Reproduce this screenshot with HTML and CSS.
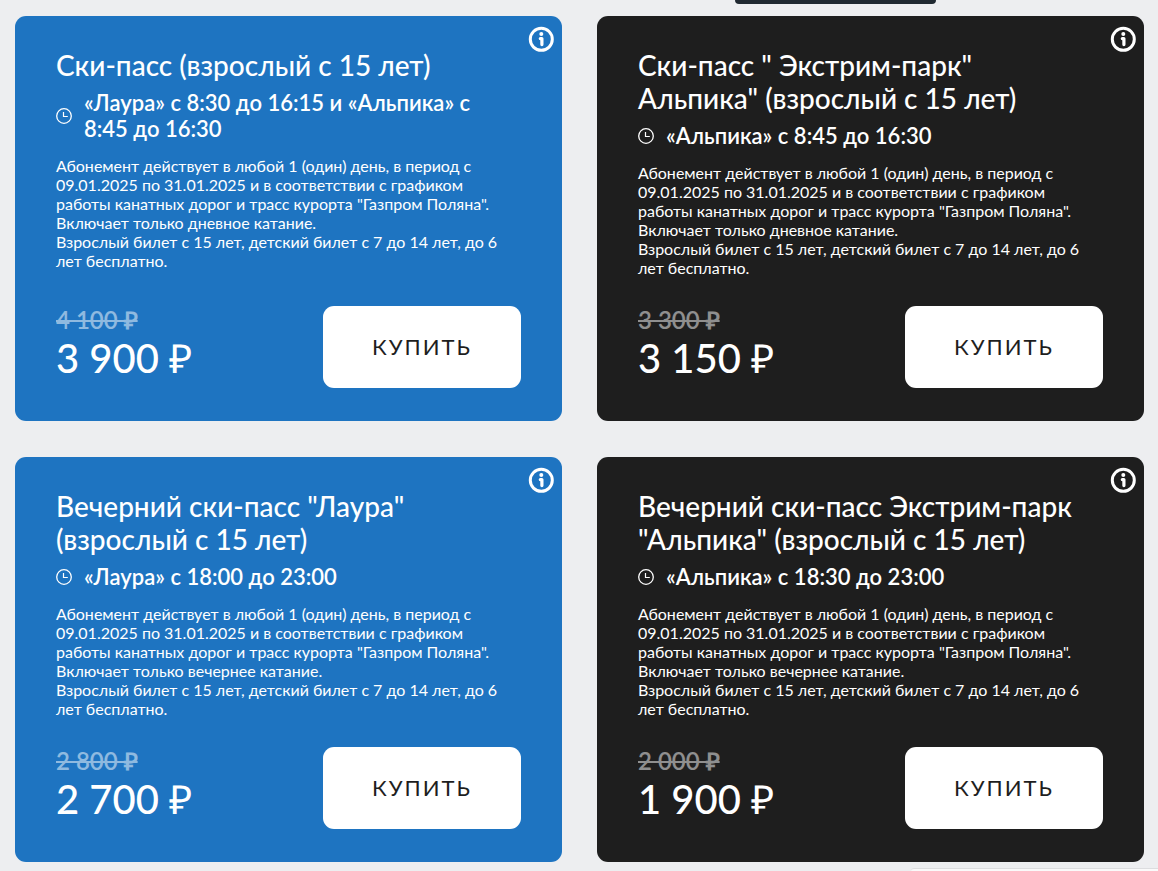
FILE: index.html
```html
<!DOCTYPE html>
<html lang="ru">
<head>
    <meta charset="UTF-8">
    <meta name="viewport" content="width=device-width, initial-scale=1.0">
    <title>Ски-пассы</title>
    <link rel="stylesheet" href="styles.css">
</head>
<body>
    <!-- Shared icons -->
    <svg class="sprite" aria-hidden="true">
        <symbol id="clock" viewBox="0 0 16 16">
            <circle cx="8" cy="8" r="7.3" fill="none" stroke="currentColor" stroke-width="1.3"/>
            <path d="M7.5 4v4.5h4.3" fill="none" stroke="currentColor" stroke-width="1.2"/>
        </symbol>
        <symbol id="info" viewBox="0 0 26 26">
            <circle cx="13.3" cy="13.3" r="11" fill="none" stroke="currentColor" stroke-width="3"/>
            <circle cx="13.3" cy="8" r="2" fill="currentColor"/>
            <path d="M12.3 12.6h1.6v6" fill="none" stroke="currentColor" stroke-width="3.2" stroke-linecap="round" stroke-linejoin="round"/>
        </symbol>
    </svg>
    <div class="top-tab"></div>

    <main class="cards">
        <article class="card blue">
            <button class="info" type="button" aria-label="Информация"><svg><use href="#info"/></svg></button>
            <h2 class="title">Ски-пасс (взрослый с 15 лет)</h2>
            <div class="time"><svg><use href="#clock"/></svg><span>«Лаура» с 8:30 до 16:15 и «Альпика» с<br>8:45 до 16:30</span></div>
            <p class="text">Абонемент действует в любой 1 (один) день, в период с<br>09.01.2025 по 31.01.2025 и в соответствии с графиком<br>работы канатных дорог и трасс курорта "Газпром Поляна".<br>Включает только дневное катание.<br>Взрослый билет с 15 лет, детский билет с 7 до 14 лет, до 6<br>лет бесплатно.</p>
            <div class="bottom">
                <div>
                    <del class="old">4 100 ₽</del>
                    <div class="price">3 900 ₽</div>
                </div>
                <button class="buy" type="button">КУПИТЬ</button>
            </div>
        </article>

        <article class="card dark">
            <button class="info" type="button" aria-label="Информация"><svg><use href="#info"/></svg></button>
            <h2 class="title">Ски-пасс " Экстрим-парк"<br>Альпика" (взрослый с 15 лет)</h2>
            <div class="time"><svg><use href="#clock"/></svg><span>«Альпика» с 8:45 до 16:30</span></div>
            <p class="text">Абонемент действует в любой 1 (один) день, в период с<br>09.01.2025 по 31.01.2025 и в соответствии с графиком<br>работы канатных дорог и трасс курорта "Газпром Поляна".<br>Включает только дневное катание.<br>Взрослый билет с 15 лет, детский билет с 7 до 14 лет, до 6<br>лет бесплатно.</p>
            <div class="bottom">
                <div>
                    <del class="old">3 300 ₽</del>
                    <div class="price">3 150 ₽</div>
                </div>
                <button class="buy" type="button">КУПИТЬ</button>
            </div>
        </article>

        <article class="card blue">
            <button class="info" type="button" aria-label="Информация"><svg><use href="#info"/></svg></button>
            <h2 class="title">Вечерний ски-пасс "Лаура"<br>(взрослый с 15 лет)</h2>
            <div class="time"><svg><use href="#clock"/></svg><span>«Лаура» с 18:00 до 23:00</span></div>
            <p class="text">Абонемент действует в любой 1 (один) день, в период с<br>09.01.2025 по 31.01.2025 и в соответствии с графиком<br>работы канатных дорог и трасс курорта "Газпром Поляна".<br>Включает только вечернее катание.<br>Взрослый билет с 15 лет, детский билет с 7 до 14 лет, до 6<br>лет бесплатно.</p>
            <div class="bottom">
                <div>
                    <del class="old">2 800 ₽</del>
                    <div class="price">2 700 ₽</div>
                </div>
                <button class="buy" type="button">КУПИТЬ</button>
            </div>
        </article>

        <article class="card dark">
            <button class="info" type="button" aria-label="Информация"><svg><use href="#info"/></svg></button>
            <h2 class="title">Вечерний ски-пасс Экстрим-парк<br>"Альпика" (взрослый с 15 лет)</h2>
            <div class="time"><svg><use href="#clock"/></svg><span>«Альпика» с 18:30 до 23:00</span></div>
            <p class="text">Абонемент действует в любой 1 (один) день, в период с<br>09.01.2025 по 31.01.2025 и в соответствии с графиком<br>работы канатных дорог и трасс курорта "Газпром Поляна".<br>Включает только вечернее катание.<br>Взрослый билет с 15 лет, детский билет с 7 до 14 лет, до 6<br>лет бесплатно.</p>
            <div class="bottom">
                <div>
                    <del class="old">2 000 ₽</del>
                    <div class="price">1 900 ₽</div>
                </div>
                <button class="buy" type="button">КУПИТЬ</button>
            </div>
        </article>
    </main>

    <div class="chat-panel"></div>
</body>
</html>
```

FILE: styles.css
```css
* {
    box-sizing: border-box;
    margin: 0;
    padding: 0;
}
body {
    background: #edeef0;
    font-family: Lato, "Open Sans", sans-serif;
    color: #fff;
}
.sprite {
    position: absolute;
    width: 0;
    height: 0;
}
/* Cards grid */
.cards {
    display: grid;
    grid-template-columns: 1fr 1fr;
    gap: 36px 35px;
    padding: 16px 14px 8px 15px;
}
.card {
    position: relative;
    display: flex;
    flex-direction: column;
    padding: 33px 41px;
    border-radius: 11px;
}
.blue {
    background: #1e74c1;
}
.dark {
    background: #1e1e1e;
}
.title {
    font-size: 28px;
    line-height: 33px;
    font-weight: 500;
    white-space: nowrap;
}
.time {
    display: flex;
    align-items: center;
    gap: 12px;
    margin: 8px 0 14px;
    font-size: 22px;
    line-height: 26px;
    font-weight: 600;
    white-space: nowrap;
}
.time svg {
    flex: none;
    width: 16px;
    height: 16px;
}
.text {
    font-size: 16px;
    line-height: 19px;
    white-space: nowrap;
}
/* Price and buy button */
.bottom {
    display: flex;
    justify-content: space-between;
    margin-top: auto;
    padding-top: 29px;
}
.old {
    display: block;
    font-size: 24px;
    line-height: 28px;
    font-weight: 600;
    opacity: 0.5;
}
.price {
    font-size: 40px;
    line-height: 48px;
    font-weight: 500;
}
.buy {
    width: 198px;
    height: 82px;
    padding-bottom: 2px;
    border: none;
    border-radius: 11px;
    background: #fff;
    color: #1e1e1e;
    font-family: inherit;
    font-size: 22px;
    letter-spacing: 2px;
    cursor: pointer;
}
.info {
    position: absolute;
    top: 10px;
    right: 8px;
    width: 26px;
    height: 26px;
    border: none;
    background: none;
    color: #fff;
    cursor: pointer;
}
.info svg {
    display: block;
    width: 26px;
    height: 26px;
}
/* Pieces that float over the page edges */
.top-tab {
    position: absolute;
    top: 0;
    right: 222px;
    width: 201px;
    height: 4px;
    border-radius: 0 0 9px 9px;
    background: #202931;
}
.chat-panel {
    position: fixed;
    right: 0;
    bottom: 0;
    width: 247px;
    height: 3px;
    border-top: 1px solid #dcdddf;
    border-radius: 8px 0 0 0;
    background: #fafafa;
}
```
